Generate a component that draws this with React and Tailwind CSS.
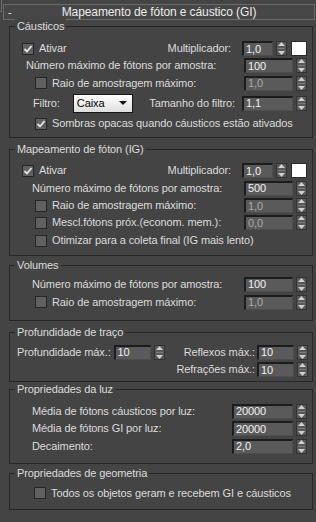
import React from "react";

// campo numérico (estilo 3ds Max escuro)
const Field = ({ v, w = "w-[49px]", dim = false }) => (
  <div
    className={`${w} h-[15px] shrink-0 border-t-2 border-l-2 border-b border-r border-t-[#1c1c1c] border-l-[#1c1c1c] border-b-[#4e4e4e] border-r-[#4e4e4e] bg-[#5a5a5a] pl-[2px] flex items-center leading-none ${
      dim ? "text-[#a9a9a9]" : "text-[#f2f2f2]"
    }`}
  >
    {v}
  </div>
);

const Spin = () => (
  <div className="ml-[3px] h-[15px] w-[11px] shrink-0 flex flex-col items-center justify-center gap-[2px] border border-[#333] bg-[#585858]">
    <svg width="7" height="4" viewBox="0 0 7 4">
      <path d="M0 4 L3.5 0 L7 4 Z" fill="#d0d0d0" />
    </svg>
    <div className="h-px w-[7px] bg-[#7a7a7a]" />
    <svg width="7" height="4" viewBox="0 0 7 4">
      <path d="M0 0 L3.5 4 L7 0 Z" fill="#d0d0d0" />
    </svg>
  </div>
);

const Check = ({ on = false }) => (
  <div className="h-[12px] w-[12px] shrink-0 border border-[#262626] bg-[#606060] flex items-center justify-center">
    {on && (
      <svg width="10" height="10" viewBox="0 0 10 10">
        <path d="M1.5 5 L4 7.5 L8.5 2" stroke="#e6e6e6" strokeWidth="1.8" fill="none" />
      </svg>
    )}
  </div>
);

const Group = ({ title, className, children }) => (
  <div className={`relative ml-[9px] w-[304px] border border-[#272727] flex flex-col ${className}`}>
    <span className="absolute left-[5px] -top-[8px] bg-[#444444] px-[2px] leading-[14px] text-[#dcdcdc]">
      {title}
    </span>
    {children}
  </div>
);

export default function App() {
  return (
    <div className="relative w-[316px] h-[522px] overflow-hidden bg-[#444444] text-[#dcdcdc] text-[11px] tracking-[-0.1px] font-['Liberation_Sans',Arial,sans-serif] flex flex-col">
      {/* canto do painel */}
      <div className="absolute left-0 top-0 w-[2px] h-[12px] border-r border-b border-[#6a6a6a]" />

      {/* barra do rollout */}
      <div className="mt-[4px] ml-[3px] w-[312px] h-[16px] border border-[#6a6a6a] bg-[#474747] flex items-center relative">
        <span className="absolute left-[4px] text-[#e8e8e8]">-</span>
        <span className="w-full text-center text-[#ececec] text-[12px]">Mapeamento de fóton e cáustico (GI)</span>
      </div>

      {/* Cáusticos */}
      <Group title="Cáusticos" className="mt-[6px] pt-[13px] pb-[4px]">
        <div className="h-[17px] flex items-center pl-[12px] pr-[5px]">
          <Check on />
          <span className="ml-[5px]">Ativar</span>
          <span className="ml-auto mr-[11px]">Multiplicador:</span>
          <Field v="1,0" w="w-[31px]" />
          <Spin />
          <div className="ml-[4px] h-[15px] w-[16px] border border-[#2a2a2a] bg-white" />
        </div>
        <div className="h-[17px] flex items-center pl-[16px] pr-[5px]">
          <span>Número máximo de fótons por amostra:</span>
          <span className="ml-auto" />
          <Field v="100" />
          <Spin />
        </div>
        <div className="h-[18px] flex items-center pl-[25px] pr-[5px]">
          <Check />
          <span className="ml-[5px]">Raio de amostragem máximo:</span>
          <span className="ml-auto" />
          <Field v="1,0" dim />
          <Spin />
        </div>
        <div className="h-[22px] flex items-center pl-[23px] pr-[5px]">
          <span>Filtro:</span>
          <div className="ml-[13px] h-[19px] w-[60px] border border-[#161616] bg-gradient-to-b from-[#ffffff] to-[#dedede] flex items-center pl-[3px] text-black">
            <span>Caixa</span>
            <svg className="ml-auto mr-[5px]" width="8" height="4" viewBox="0 0 8 4">
              <path d="M0 0 L8 0 L4 4 Z" fill="#111" />
            </svg>
          </div>
          <span className="ml-auto mr-[7px]">Tamanho do filtro:</span>
          <Field v="1,1" w="w-[51px]" />
          <Spin />
        </div>
        <div className="h-[19px] flex items-center pl-[25px] pr-[5px]">
          <Check on />
          <span className="ml-[5px]">Sombras opacas quando cáusticos estão ativados</span>
        </div>
      </Group>

      {/* Mapeamento de fóton (IG) */}
      <Group title="Mapeamento de fóton (IG)" className="mt-[11px] pt-[12px] pb-[5px]">
        <div className="h-[17px] flex items-center pl-[12px] pr-[5px]">
          <Check on />
          <span className="ml-[5px]">Ativar</span>
          <span className="ml-auto mr-[11px]">Multiplicador:</span>
          <Field v="1,0" w="w-[31px]" />
          <Spin />
          <div className="ml-[4px] h-[15px] w-[16px] border border-[#2a2a2a] bg-white" />
        </div>
        <div className="h-[18px] flex items-center pl-[22px] pr-[5px]">
          <span>Número máximo de fótons por amostra:</span>
          <span className="ml-auto" />
          <Field v="500" />
          <Spin />
        </div>
        <div className="h-[17px] flex items-center pl-[25px] pr-[5px]">
          <Check />
          <span className="ml-[5px]">Raio de amostragem máximo:</span>
          <span className="ml-auto" />
          <Field v="1,0" dim />
          <Spin />
        </div>
        <div className="h-[17px] flex items-center pl-[25px] pr-[5px]">
          <Check />
          <span className="ml-[5px]">Mescl.fótons próx.(econom. mem.):</span>
          <span className="ml-auto" />
          <Field v="0,0" dim />
          <Spin />
        </div>
        <div className="h-[19px] flex items-center pl-[25px] pr-[5px]">
          <Check />
          <span className="ml-[5px]">Otimizar para a coleta final (IG mais lento)</span>
        </div>
      </Group>

      {/* Volumes */}
      <Group title="Volumes" className="mt-[9px] pt-[9px] pb-[9px]">
        <div className="h-[18px] flex items-center pl-[22px] pr-[5px]">
          <span>Número máximo de fótons por amostra:</span>
          <span className="ml-auto" />
          <Field v="100" />
          <Spin />
        </div>
        <div className="h-[18px] flex items-center pl-[25px] pr-[5px]">
          <Check />
          <span className="ml-[5px]">Raio de amostragem máximo:</span>
          <span className="ml-auto" />
          <Field v="1,0" dim />
          <Spin />
        </div>
      </Group>

      {/* Profundidade de traço */}
      <Group title="Profundidade de traço" className="mt-[11px] pt-[10px] pb-[3px]">
        <div className="h-[18px] flex items-center pl-[7px] pr-[4px]">
          <span>Profundidade máx.:</span>
          <span className="ml-[3px]" />
          <Field v="10" w="w-[37px]" />
          <Spin />
          <span className="ml-auto mr-[2px]">Reflexos máx.:</span>
          <Field v="10" w="w-[37px]" />
          <Spin />
        </div>
        <div className="h-[17px] flex items-center justify-end pl-[7px] pr-[4px]">
          <span className="mr-[2px]">Refrações máx.:</span>
          <Field v="10" w="w-[37px]" />
          <Spin />
        </div>
      </Group>

      {/* Propriedades da luz */}
      <Group title="Propriedades da luz" className="mt-[7px] pt-[12px] pb-[8px]">
        <div className="h-[18px] flex items-center pl-[22px] pr-[5px]">
          <span>Média de fótons cáusticos por luz:</span>
          <span className="ml-auto" />
          <Field v="20000" w="w-[61px]" />
          <Spin />
        </div>
        <div className="h-[17px] flex items-center pl-[22px] pr-[5px]">
          <span>Média de fótons GI por luz:</span>
          <span className="ml-auto" />
          <Field v="20000" w="w-[61px]" />
          <Spin />
        </div>
        <div className="h-[18px] flex items-center pl-[22px] pr-[5px]">
          <span>Decaimento:</span>
          <span className="ml-auto" />
          <Field v="2,0" w="w-[61px]" />
          <Spin />
        </div>
      </Group>

      {/* Propriedades de geometria */}
      <Group title="Propriedades de geometria" className="mt-[9px] pt-[10px] pb-[7px]">
        <div className="h-[18px] flex items-center pl-[24px] pr-[5px]">
          <Check />
          <span className="ml-[5px]">Todos os objetos geram e recebem GI e cáusticos</span>
        </div>
      </Group>
    </div>
  );
}
